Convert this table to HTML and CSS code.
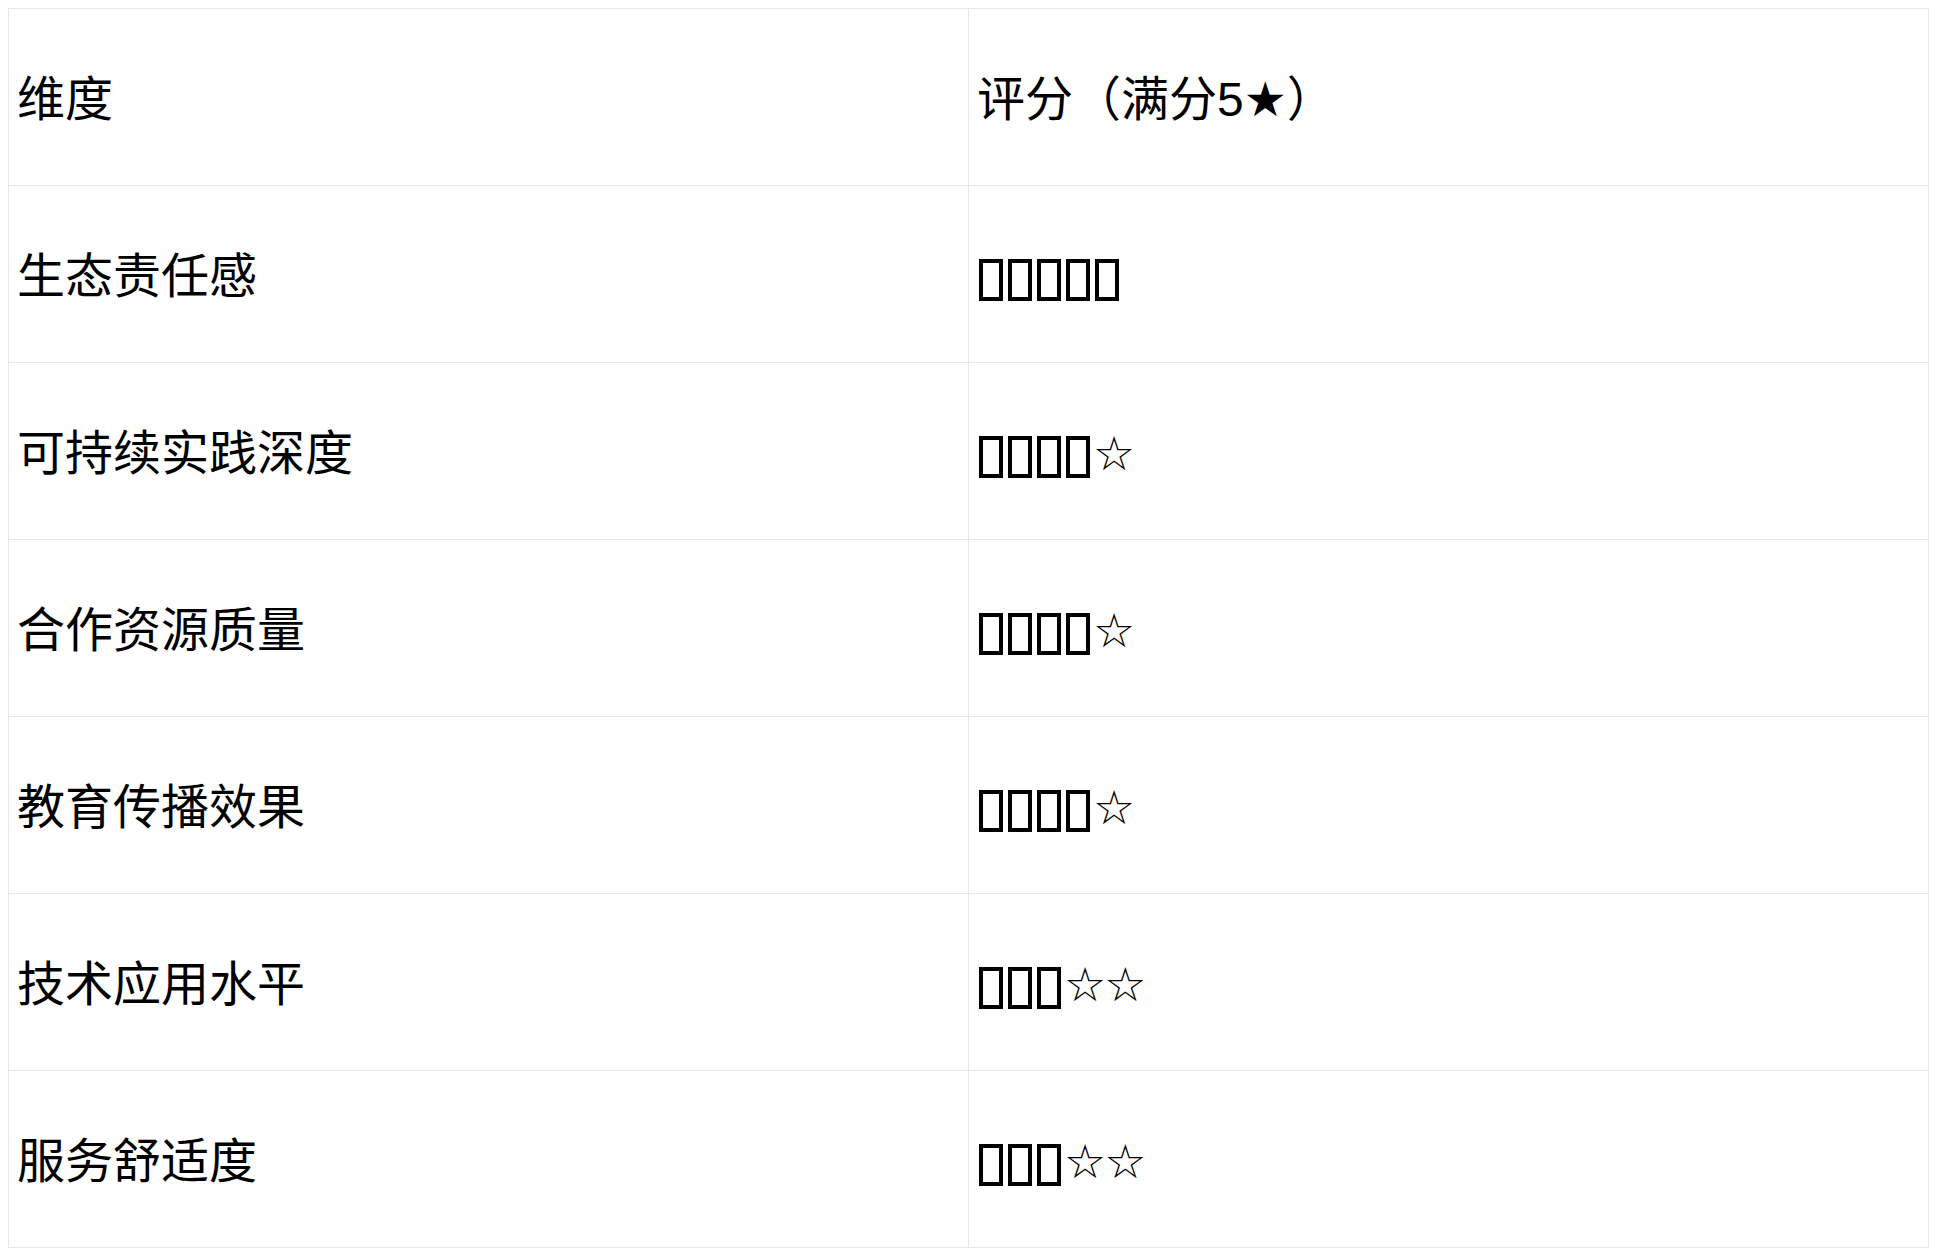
FILE: index.html
```html
<!DOCTYPE html>
<html lang="zh">
<head>
<meta charset="utf-8">
<title>评分</title>
<link rel="stylesheet" href="styles.css">
</head>
<body>
<table class="score-table">
  <thead>
    <tr><th>维度</th><th>评分（满分5★）</th></tr>
  </thead>
  <tbody>
    <tr><td>生态责任感</td><td><span class="tofu">⭐</span><span class="tofu">⭐</span><span class="tofu">⭐</span><span class="tofu">⭐</span><span class="tofu">⭐</span></td></tr>
    <tr><td>可持续实践深度</td><td><span class="tofu">⭐</span><span class="tofu">⭐</span><span class="tofu">⭐</span><span class="tofu">⭐</span><span class="empty">☆</span></td></tr>
    <tr><td>合作资源质量</td><td><span class="tofu">⭐</span><span class="tofu">⭐</span><span class="tofu">⭐</span><span class="tofu">⭐</span><span class="empty">☆</span></td></tr>
    <tr><td>教育传播效果</td><td><span class="tofu">⭐</span><span class="tofu">⭐</span><span class="tofu">⭐</span><span class="tofu">⭐</span><span class="empty">☆</span></td></tr>
    <tr><td>技术应用水平</td><td><span class="tofu">⭐</span><span class="tofu">⭐</span><span class="tofu">⭐</span><span class="empty">☆☆</span></td></tr>
    <tr><td>服务舒适度</td><td><span class="tofu">⭐</span><span class="tofu">⭐</span><span class="tofu">⭐</span><span class="empty">☆☆</span></td></tr>
  </tbody>
</table>
</body>
</html>
```

FILE: styles.css
```css
body {
  margin: 8px;
  background: #ffffff;
  color: #000000;
  font-family: "Liberation Sans", "DejaVu Sans", "Noto Sans CJK SC", sans-serif;
}

.score-table {
  width: 1921px;
  border-collapse: collapse;
  table-layout: fixed;
}

.score-table th,
.score-table td {
  border: 1px solid #e5e7eb;
  height: 177px;
  box-sizing: border-box;
  padding: 6px 8px 0 8px;
  font-size: 48px;
  font-weight: normal;
  text-align: left;
  vertical-align: middle;
  line-height: 70px;
}

.tofu {
  display: inline-block;
  box-sizing: border-box;
  width: 24px;
  height: 42px;
  margin: 0 3px 0 2px;
  border: 4px solid #000000;
  overflow: hidden;
  text-align: center;
  white-space: nowrap;
  font-size: 11px;
  line-height: 34px;
  color: transparent;
  vertical-align: -8px;
}

.empty {
  font-family: "DejaVu Sans", sans-serif;
  font-size: 47px;
  letter-spacing: -2px;
}
```
